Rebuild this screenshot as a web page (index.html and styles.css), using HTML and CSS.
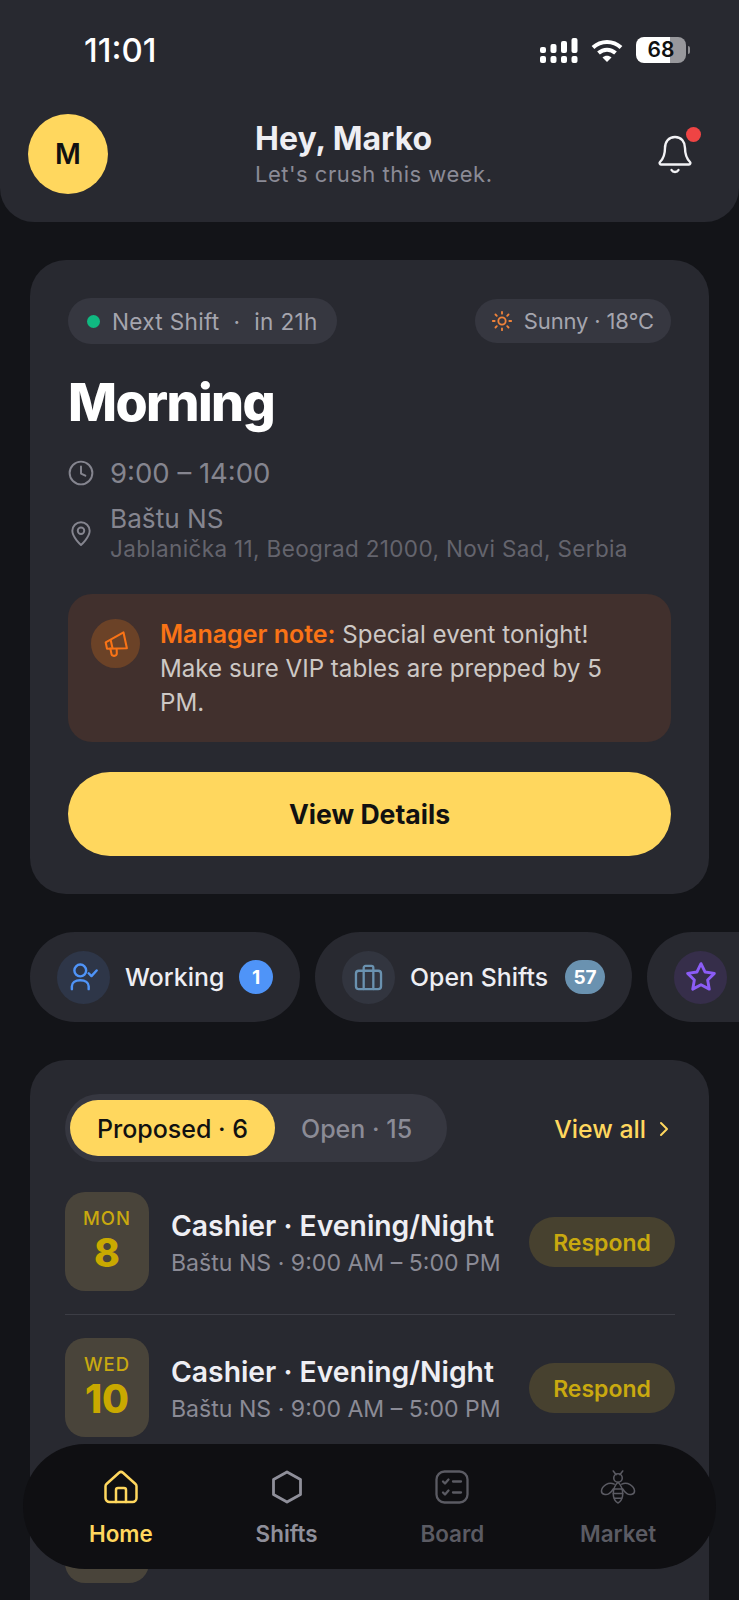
FILE: index.html
```html
<!DOCTYPE html>
<html lang="en">
<head>
<meta charset="utf-8">
<title>Home</title>
<link rel="stylesheet" href="styles.css">
</head>
<body>
<div class="screen">
  <header class="header">
    <div class="status">
      <span class="time">11:01</span>
      <div class="status-icons">
        <svg class="sig" width="38" height="26" viewBox="0 0 38 26" fill="#fff">
          <rect x="0" y="9" width="6" height="6" rx="2"/><rect x="0" y="18" width="6" height="7" rx="2"/>
          <rect x="10.5" y="6" width="6" height="9" rx="2"/><rect x="10.5" y="18" width="6" height="7" rx="2"/>
          <rect x="21" y="3" width="6" height="12" rx="2"/><rect x="21" y="18" width="6" height="7" rx="2"/>
          <rect x="31.5" y="0" width="6" height="15" rx="2"/><rect x="31.5" y="18" width="6" height="7" rx="2"/>
        </svg>
        <svg class="wifi" width="32" height="24" viewBox="0 0 32 24" fill="none" stroke="#fff" stroke-width="4">
          <path d="M2 8.5C10 1 22 1 30 8.5"/><path d="M7.5 14C12.5 9.5 19.5 9.5 24.5 14"/>
          <path d="M11.5 18.5 16 23l4.500-4.500C18 16 14 16 11.500 18.500Z" fill="#fff" stroke="none"/>
        </svg>
        <div class="battery"><div class="batt-body"><span class="batt-num">68</span></div><div class="batt-cap"></div></div>
      </div>
    </div>
    <div class="top-row">
      <div class="avatar">M</div>
      <div class="greeting">
        <div class="hey">Hey, Marko</div>
        <div class="sub">Let's crush this week.</div>
      </div>
      <div class="bell">
        <svg width="36" height="42" viewBox="0 0 36 42" fill="none" stroke="#f2f2f5" stroke-width="2.400" stroke-linecap="round" stroke-linejoin="round">
          <path d="M18 4C11.500 4 8 9 8 15c0 8-2 11-5 14-.8.9-.3 2.500 1 2.500h28c1.300 0 1.800-1.600 1-2.500-3-3-5-6-5-14 0-6-3.500-11-10-11Z"/>
          <path d="M14.500 37c1.500 2.700 5.500 2.700 7 0"/>
        </svg>
        <span class="dot"></span>
      </div>
    </div>
  </header>

  <section class="card next">
    <div class="pills">
      <div class="pill pill-shift"><span class="green"></span><span>Next Shift</span><span class="mid">·</span><span>in 21h</span></div>
      <div class="pill pill-weather">
        <svg width="22" height="22" viewBox="0 0 24 24" fill="none" stroke="#f0833a" stroke-width="2" stroke-linecap="round"><circle cx="12" cy="12" r="4"/><path d="M12 2v2M12 20v2M4.900 4.900l1.400 1.400M17.700 17.700l1.400 1.400M2 12h2M20 12h2M6.300 17.700l-1.400 1.400M19.100 4.900l-1.400 1.400"/></svg>
        <span>Sunny · 18°C</span>
      </div>
    </div>
    <h1 class="title">Morning</h1>
    <div class="info info-time">
      <svg width="26" height="26" viewBox="0 0 24 24" fill="none" stroke="#85858f" stroke-width="1.800" stroke-linecap="round" stroke-linejoin="round"><circle cx="12" cy="12" r="10.500"/><path d="M12 6v6.500l4 2"/></svg>
      <span class="time-text">9:00 – 14:00</span>
    </div>
    <div class="info info-place">
      <svg width="26" height="26" viewBox="0 0 24 24" fill="none" stroke="#85858f" stroke-width="1.800" stroke-linecap="round" stroke-linejoin="round"><path d="M20 10c0 6-8 13-8 13s-8-7-8-13a8 8 0 0 1 16 0Z"/><circle cx="12" cy="10" r="3"/></svg>
      <div>
        <div class="place">Baštu NS</div>
        <div class="addr">Jablanička 11, Beograd 21000, Novi Sad, Serbia</div>
      </div>
    </div>
    <div class="note">
      <div class="note-icon">
        <svg width="26" height="26" viewBox="0 0 24 24" fill="none" stroke="#f97316" stroke-width="1.900" stroke-linecap="round" stroke-linejoin="round"><g transform="rotate(-12 12 12)"><path d="M21 3v15L3 14.500V8.500L21 3Z"/><path d="M6 15v4.500a2.500 2.500 0 0 0 5 .8l.6-3.500"/><path d="M8 8v7"/></g></svg>
      </div>
      <p class="note-text"><b>Manager note:</b> <span>Special event tonight! Make sure VIP tables are prepped by 5 PM.</span></p>
    </div>
    <button class="cta">View Details</button>
  </section>

  <div class="chips">
    <div class="chip chip-working">
      <span class="chip-icon ci-blue">
        <svg width="28" height="28" viewBox="0 0 30 30" fill="none" stroke="#4f94f8" stroke-width="2.600" stroke-linecap="round" stroke-linejoin="round"><circle cx="11" cy="8" r="6.300"/><path d="M2 28v-3c0-4 3.500-6.500 9-6.500s9 2.500 9 6.500v3"/><path d="m20 11 3 3 5.500-6"/></svg>
      </span>
      <span class="chip-label">Working</span>
      <span class="badge b-blue">1</span>
    </div>
    <div class="chip chip-open">
      <span class="chip-icon ci-slate">
        <svg width="29" height="27" viewBox="0 0 30 28" fill="none" stroke="#6a92b0" stroke-width="2.400" stroke-linecap="round" stroke-linejoin="round"><rect x="2" y="7" width="26" height="19" rx="3"/><path d="M10 7V4a2 2 0 0 1 2-2h6a2 2 0 0 1 2 2v3M10 7v19M20 7v19"/></svg>
      </span>
      <span class="chip-label">Open Shifts</span>
      <span class="badge b-slate">57</span>
    </div>
    <div class="chip chip-star">
      <span class="chip-icon ci-purple">
        <svg width="32" height="32" viewBox="0 0 24 24" fill="none" stroke="#8b5cf6" stroke-width="2.200" stroke-linecap="round" stroke-linejoin="round"><path d="m12 2 3.100 6.300 6.900 1-5 4.900 1.200 6.900L12 17.800l-6.200 3.300L7 14.200 2 9.300l6.900-1L12 2Z"/></svg>
      </span>
    </div>
  </div>

  <section class="card list">
    <div class="list-head">
      <div class="tabs">
        <span class="tab active">Proposed · 6</span>
        <span class="tab">Open · 15</span>
      </div>
      <div class="viewall">View all
        <svg width="12" height="18" viewBox="0 0 12 18" fill="none" stroke="#ffd75e" stroke-width="2" stroke-linecap="round" stroke-linejoin="round"><path d="m3 3 6 6-6 6"/></svg>
      </div>
    </div>
    <div class="row">
      <div class="date"><span class="dow">MON</span><span class="dnum">8</span></div>
      <div class="row-text"><div class="role">Cashier · Evening/Night</div><div class="where">Baštu NS · 9:00 AM – 5:00 PM</div></div>
      <span class="respond">Respond</span>
    </div>
    <div class="row">
      <div class="date"><span class="dow">WED</span><span class="dnum">10</span></div>
      <div class="row-text"><div class="role">Cashier · Evening/Night</div><div class="where">Baštu NS · 9:00 AM – 5:00 PM</div></div>
      <span class="respond">Respond</span>
    </div>
    <div class="row">
      <div class="date"></div>
    </div>
  </section>

  <nav class="nav">
    <div class="nav-item on">
      <svg width="34" height="34" viewBox="0 0 34 34" fill="none" stroke="#ffd75e" stroke-width="2.500" stroke-linecap="round" stroke-linejoin="round"><path d="M2.500 14 15 2.800a3 3 0 0 1 4 0L31.500 14a3 3 0 0 1 1 2.200V28a4 4 0 0 1-4 4H5.500a4 4 0 0 1-4-4V16.200a3 3 0 0 1 1-2.200Z"/><path d="M12 32V20a2 2 0 0 1 2-2h6a2 2 0 0 1 2 2v12"/></svg>
      <span>Home</span>
    </div>
    <div class="nav-item mid-tone">
      <svg width="34" height="34" viewBox="0 0 34 34" fill="none" stroke="#8f8f9a" stroke-width="2.800" stroke-linejoin="round"><path d="m17 2 13.500 7.500v15L17 32 3.500 24.500v-15L17 2Z"/></svg>
      <span>Shifts</span>
    </div>
    <div class="nav-item dim">
      <svg width="34" height="34" viewBox="0 0 34 34" fill="none" stroke="#5b5b63" stroke-width="2.300" stroke-linecap="round" stroke-linejoin="round"><rect x="1.500" y="1.500" width="31" height="31" rx="8"/><path d="m8 11.500 2 2 3.500-4M8 22.500l2 2 3.500-4M18 11.500h8M18 22.500h8"/></svg>
      <span>Board</span>
    </div>
    <div class="nav-item dim">
      <svg width="38" height="36" viewBox="0 0 38 36" fill="none" stroke="#5b5b63" stroke-width="1.600" stroke-linecap="round" stroke-linejoin="round"><path d="M14 1l3 4M24 1l-3 4"/><circle cx="19" cy="8.500" r="4.500"/><path d="M19 13c-3.500 3-5 8-5 13 0 4 2.500 8 5 9 2.500-1 5-5 5-9 0-5-1.500-10-5-13Z"/><path d="M14.500 20h9M14 25h10M15 30h8"/><path d="M15 15C9 12 2 17 1.500 22c-.3 4 5 5 8 3 2-1.300 3.500-3 4.500-5"/><path d="M23 15c6-3 13 2 13.500 7 .3 4-5 5-8 3-2-1.300-3.500-3-4.500-5"/></svg>
      <span>Market</span>
    </div>
  </nav>
</div>
</body>
</html>
```

FILE: styles.css
```css
* { box-sizing: border-box; }
html, body { margin: 0; padding: 0; }
body { background: #131418; font-family: Inter, "Noto Sans", sans-serif; color: #fff; }
.screen { position: relative; width: 739px; height: 1600px; overflow: hidden; background: #131418; }

.header { height: 222px; background: #282930; border-radius: 0 0 34px 34px; padding: 0 28px; }
.status { height: 114px; display: flex; justify-content: space-between; padding: 32px 21px 0 56px; }
.time { font-size: 33px; font-weight: 500; line-height: 36px; letter-spacing: 0; color: #fff; }
.status-icons { display: flex; gap: 13px; align-items: flex-start; padding-top: 5px; }
.sig { margin-top: 1px; }
.wifi { margin-top: 2px; }
.battery { display: flex; align-items: center; gap: 2px; }
.batt-body { width: 50px; height: 26px; border-radius: 8px; background: linear-gradient(90deg, #fff 0 68%, #98989c 68% 100%); display: flex; align-items: center; justify-content: center; }
.batt-num { color: #111; font-size: 21px; font-weight: 600; line-height: 26px; }
.batt-cap { width: 2px; height: 8px; background: #8c8c90; border-radius: 0 2px 2px 0; }

.top-row { display: flex; align-items: center; }
.avatar { width: 80px; height: 80px; border-radius: 50%; background: #ffd75e; color: #111; font-size: 28px; font-weight: 600; display: flex; align-items: center; justify-content: center; flex: none; }
.greeting { margin-left: 147px; flex: 1; padding-top: 3px; }
.hey { font-size: 32px; font-weight: 700; line-height: 36px; color: #eeeef3; }
.sub { margin-top: 1px; font-size: 22px; line-height: 32px; color: #8b8b96; letter-spacing: 0.5px; }
.bell { position: relative; width: 36px; height: 42px; margin-right: 18px; }
.dot { position: absolute; right: -8px; top: -6px; width: 15px; height: 15px; border-radius: 50%; background: #ef4444; }

.card { background: #282930; border-radius: 36px; margin: 0 30px; }
.next { margin-top: 38px; padding: 38px 38px 38px; height: 634px; }
.pills { display: flex; justify-content: space-between; align-items: center; }
.pill { display: flex; align-items: center; background: #363740; border-radius: 23px; color: #a5a5ae; font-size: 22px; }
.pill-shift { height: 46px; padding: 0 19px; letter-spacing: 0.3px; font-size: 22.600px; }
.green { width: 13px; height: 13px; border-radius: 50%; background: #10b981; margin-right: 12px; }
.mid { margin: 0 14px; }
.pill-weather { height: 44px; padding: 0 17px 0 16px; gap: 11px; letter-spacing: -0.15px; }
.title { margin: 27px 0 0; font-size: 52px; line-height: 64px; font-weight: 800; letter-spacing: -1.600px; color: #fff; }
.info { display: flex; align-items: center; gap: 16px; }
.info-time { margin-top: 18px; height: 40px; }
.time-text { font-size: 27.500px; color: #85858f; }
.info-place { margin-top: 9px; }
.place { font-size: 26.200px; line-height: 33px; color: #85858f; }
.addr { font-size: 22.500px; line-height: 28px; color: #64646d; letter-spacing: 0.35px; }
.note { margin-top: 31px; height: 148px; border-radius: 24px; background: #41302d; padding: 23px 24px 0 23px; display: flex; gap: 20px; }
.note-icon { width: 49px; height: 49px; border-radius: 50%; background: #6b4227; flex: none; display: flex; align-items: center; justify-content: center; margin-top: 2px; }
.note-text { margin: 0; font-size: 24.150px; line-height: 34px; color: #cdc8c5; }
.note-text b { color: #f97316; font-weight: 600; font-size: 25px; }
.cta { display: block; width: 100%; height: 84px; margin-top: 30px; border: 0; border-radius: 42px; background: #ffd75e; color: #111; font: 700 26.600px Inter, sans-serif; }

.chips { display: flex; gap: 15px; margin: 38px 0 0 30px; width: 800px; }
.chip { display: flex; align-items: center; height: 90px; background: #282930; border-radius: 45px; padding: 0 27px; flex: none; }
.chip-working { width: 270px; }
.chip-open { width: 317px; }
.chip-star { width: 140px; }
.chip-icon { width: 53px; height: 53px; border-radius: 50%; display: flex; align-items: center; justify-content: center; flex: none; }
.ci-blue { background: #2e3648; }
.ci-slate { background: #32353f; }
.ci-purple { background: #362e4a; }
.chip-label { margin-left: 15px; font-size: 24.800px; font-weight: 500; color: #eeeef3; flex: 1; white-space: nowrap; letter-spacing: 0.05px; }
.badge { height: 34px; min-width: 34px; padding: 0 6px; border-radius: 17px; font-size: 19px; font-weight: 700; color: #fff; display: flex; align-items: center; justify-content: center; }
.b-blue { background: #4f94f8; }
.b-slate { background: #6a92b0; width: 40px; }

.list { margin-top: 38px; height: 600px; padding: 34px 34px 0 35px; }
.list-head { display: flex; justify-content: space-between; align-items: center; }
.tabs { display: flex; height: 68px; width: 382px; background: #363740; border-radius: 34px; padding: 6px 6px 6px 5px; align-items: center; }
.tab { height: 56px; display: flex; align-items: center; justify-content: center; padding: 2px 26px 0; font-size: 25px; font-weight: 500; color: #8b8b96; border-radius: 28px; white-space: nowrap; }
.tab.active { background: #ffd75e; color: #111; width: 205px; padding: 2px 0 0; }
.viewall { display: flex; align-items: center; gap: 12px; color: #ffd75e; font-size: 24.800px; font-weight: 500; padding: 2px 5px 0 0; }
.row { display: flex; align-items: center; padding: 0 0 23px; margin-bottom: 23px; border-bottom: 1px solid #3c3d45; }
.list-head + .row { margin-top: 30px; }
.date { width: 84px; height: 99px; flex: none; border-radius: 20px; background: #49443a; display: flex; flex-direction: column; align-items: center; justify-content: center; padding-bottom: 1px; }
.dow { font-size: 18.500px; font-weight: 500; color: #c9a90f; letter-spacing: 1px; line-height: 24px; }
.dnum { font-size: 39px; font-weight: 800; color: #c9a900; line-height: 46px; }
.row-text { margin-left: 22px; flex: 1; padding-top: 4px; }
.role { font-size: 28.300px; font-weight: 600; line-height: 36px; color: #eeeef3; white-space: nowrap; }
.where { margin-top: 2px; font-size: 23.100px; line-height: 34px; color: #8b8b96; white-space: nowrap; }
.respond { width: 146px; height: 50px; border-radius: 25px; background: #47412f; color: #c9a90f; font-size: 23px; font-weight: 600; display: flex; align-items: center; justify-content: center; flex: none; padding-top: 2px; }

.nav { position: absolute; left: 23px; top: 1444px; width: 693px; height: 125px; border-radius: 62px; background: #0f0f12; display: grid; grid-template-columns: repeat(4, 1fr); padding: 26px 15px 0; }
.nav-item { display: flex; flex-direction: column; align-items: center; font-size: 22.400px; font-weight: 600; }
.nav-item svg { height: 34px; }
.nav-item span { margin-top: 16px; line-height: 28px; }
.on { color: #ffd75e; }
.mid-tone { color: #8f8f9a; }
.dim { color: #5b5b63; }
```
